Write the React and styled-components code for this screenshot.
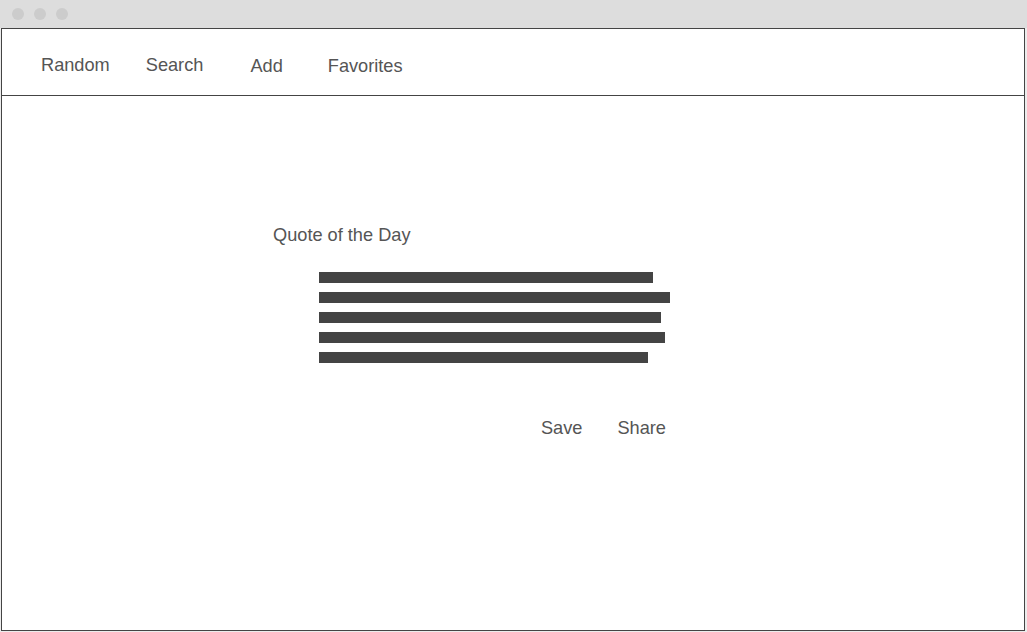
import React from 'react';
import styled, { createGlobalStyle } from 'styled-components';

const GlobalStyle = createGlobalStyle`
  html, body {
    margin: 0;
    padding: 0;
    background: #ececec;
  }
  body {
    font-family: 'Liberation Sans', Arial, sans-serif;
  }
`;

const Page = styled.div`
  width: 1027px;
  height: 632px;
  display: flex;
  flex-direction: column;
  background: #ececec;
  overflow: hidden;
`;

const TitleBar = styled.div`
  height: 28px;
  flex: none;
  display: flex;
  align-items: center;
  gap: 10px;
  padding-left: 12px;
  background: #dddddd;
`;

const Dot = styled.span`
  width: 12px;
  height: 12px;
  border-radius: 50%;
  background: #cccccc;
`;

const Window = styled.div`
  width: 1022px;
  height: 601px;
  margin-left: 1px;
  border: 1px solid #444444;
  background: #ffffff;
  display: flex;
  flex-direction: column;
`;

const Nav = styled.nav`
  height: 66px;
  flex: none;
  display: flex;
  align-items: center;
  padding-left: 39px;
  border-bottom: 1px solid #444444;
`;

const NavItem = styled.span`
  font-size: 18.2px;
  line-height: 22px;
  color: #555555;
  margin-right: ${p => p.gap}px;
  padding-top: ${p => (p.low ? 8 : 6)}px;
`;

const Main = styled.main`
  padding: 128px 0 0 271px;
  display: flex;
  flex-direction: column;
`;

const Heading = styled.div`
  font-size: 18.2px;
  line-height: 22px;
  color: #555555;
`;

const Lines = styled.div`
  margin: 26px 0 0 46px;
  display: flex;
  flex-direction: column;
  gap: 9px;
`;

const Line = styled.div`
  height: 11px;
  background: #444444;
`;

const Actions = styled.div`
  width: 393px;
  margin-top: 54px;
  display: flex;
  justify-content: flex-end;
  gap: 35px;
`;

const Action = styled.span`
  font-size: 18.2px;
  line-height: 22px;
  color: #555555;
`;

const navItems = [
  { label: 'Random', gap: 36 },
  { label: 'Search', gap: 47 },
  { label: 'Add', gap: 45, low: true },
  { label: 'Favorites', gap: 0, low: true },
];

const lineWidths = [334, 351, 342, 346, 329];

export default function App() {
  return (
    <>
      <GlobalStyle />
      <Page>
        <TitleBar>
          <Dot />
          <Dot />
          <Dot />
        </TitleBar>
        <Window>
          <Nav>
            {navItems.map(item => (
              <NavItem key={item.label} gap={item.gap} low={item.low}>
                {item.label}
              </NavItem>
            ))}
          </Nav>
          <Main>
            <Heading>Quote of the Day</Heading>
            <Lines>
              {lineWidths.map((w, i) => (
                <Line key={i} style={{ width: w }} />
              ))}
            </Lines>
            <Actions>
              <Action>Save</Action>
              <Action>Share</Action>
            </Actions>
          </Main>
        </Window>
      </Page>
    </>
  );
}
